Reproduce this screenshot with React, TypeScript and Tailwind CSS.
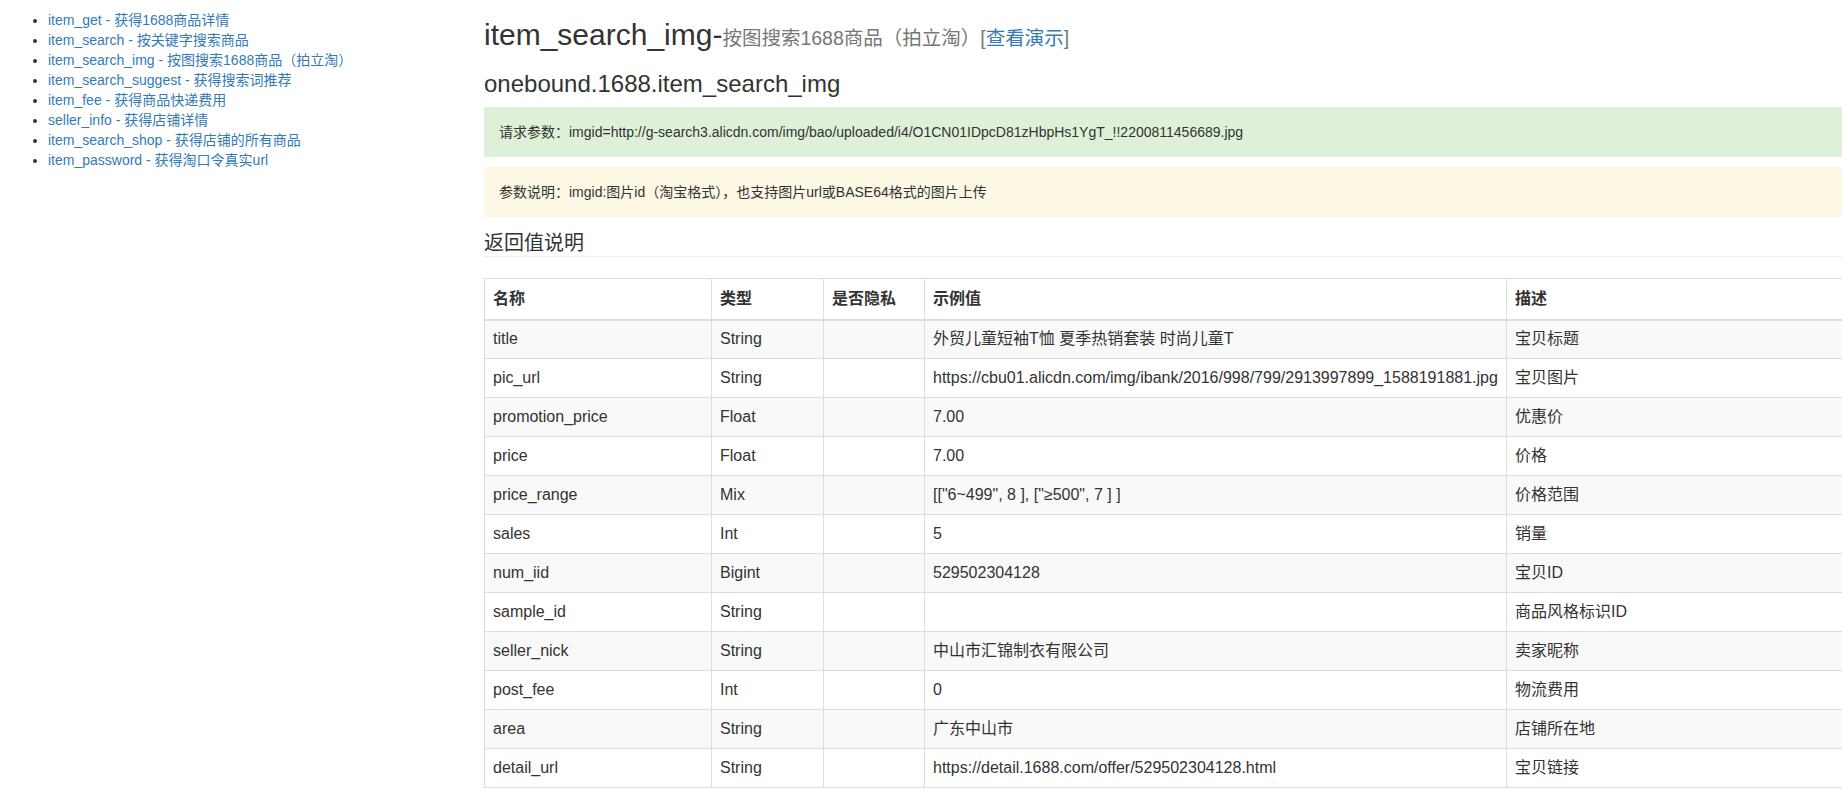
const apis = [
  { name: "item_get", desc: "获得1688商品详情" },
  { name: "item_search", desc: "按关键字搜索商品" },
  { name: "item_search_img", desc: "按图搜索1688商品（拍立淘）" },
  { name: "item_search_suggest", desc: "获得搜索词推荐" },
  { name: "item_fee", desc: "获得商品快递费用" },
  { name: "seller_info", desc: "获得店铺详情" },
  { name: "item_search_shop", desc: "获得店铺的所有商品" },
  { name: "item_password", desc: "获得淘口令真实url" },
];

const rows = [
  ["title", "String", "", "外贸儿童短袖T恤 夏季热销套装 时尚儿童T", "宝贝标题"],
  ["pic_url", "String", "", "https://cbu01.alicdn.com/img/ibank/2016/998/799/2913997899_1588191881.jpg", "宝贝图片"],
  ["promotion_price", "Float", "", "7.00", "优惠价"],
  ["price", "Float", "", "7.00", "价格"],
  ["price_range", "Mix", "", '[["6~499", 8 ], ["≥500", 7 ] ]', "价格范围"],
  ["sales", "Int", "", "5", "销量"],
  ["num_iid", "Bigint", "", "529502304128", "宝贝ID"],
  ["sample_id", "String", "", "", "商品风格标识ID"],
  ["seller_nick", "String", "", "中山市汇锦制衣有限公司", "卖家昵称"],
  ["post_fee", "Int", "", "0", "物流费用"],
  ["area", "String", "", "广东中山市", "店铺所在地"],
  ["detail_url", "String", "", "https://detail.1688.com/offer/529502304128.html", "宝贝链接"],
];

const headers = ["名称", "类型", "是否隐私", "示例值", "描述"];

export default function App() {
  return (
    <div className="w-[1842px] h-[793px] overflow-hidden bg-white text-[#333] text-[14px] leading-[20px] font-['Liberation_Sans','Noto_Sans_CJK_SC',sans-serif] flex">
      {/* sidebar */}
      <div className="w-[484px] shrink-0">
        <ul className="list-disc pl-[48px] pt-[10px]">
          {apis.map((a) => (
            <li key={a.name} className="h-[20px] leading-[20px]">
              <a href="#" className="text-[#337ab7]">
                {a.name} - {a.desc}
              </a>
            </li>
          ))}
        </ul>
      </div>

      {/* main */}
      <div className="w-[1420px] shrink-0">
        <h2 className="mt-[18px] h-[33px] text-[30px] leading-[33px] font-normal whitespace-nowrap">
          item_search_img-
          <small className="text-[19.5px] leading-[20px] text-[#777]">
            按图搜索1688商品（拍立淘）[<a href="#" className="text-[#337ab7]">查看演示</a>]
          </small>
        </h2>
        <h3 className="mt-[20px] mb-[10px] h-[26px] text-[24px] leading-[26px] font-normal">
          onebound.1688.item_search_img
        </h3>

        <div className="bg-[#dff0d8] h-[50px] px-[15px] flex items-center whitespace-nowrap">
          请求参数：imgid=http://g-search3.alicdn.com/img/bao/uploaded/i4/O1CN01IDpcD81zHbpHs1YgT_!!2200811456689.jpg
        </div>
        <div className="bg-[#fcf8e3] h-[50px] px-[15px] mt-[10px] flex items-center whitespace-nowrap">
          参数说明：imgid:图片id（淘宝格式），也支持图片url或BASE64格式的图片上传
        </div>

        <div className="mt-[13px] h-[27px] text-[20px] leading-[26px] border-b border-[#eee]">返回值说明</div>

        <table className="mt-[21px] w-full table-fixed border-collapse text-[16px] leading-[22px]">
          <colgroup>
            <col className="w-[227px]" />
            <col className="w-[112px]" />
            <col className="w-[101px]" />
            <col className="w-[582px]" />
            <col />
          </colgroup>
          <thead>
            <tr className="h-[41px]">
              {headers.map((h) => (
                <th key={h} className="text-left font-bold px-[8px] py-0 border border-[#ddd] border-b-2 whitespace-nowrap align-middle">
                  {h}
                </th>
              ))}
            </tr>
          </thead>
          <tbody>
            {rows.map((r, i) => (
              <tr key={r[0]} className={i % 2 === 0 ? "h-[39px] bg-[#f9f9f9]" : "h-[39px] bg-white"}>
                {r.map((c, j) => (
                  <td key={j} className="px-[8px] py-0 border border-[#ddd] whitespace-nowrap align-middle">
                    {c}
                  </td>
                ))}
              </tr>
            ))}
          </tbody>
        </table>
      </div>
    </div>
  );
}
